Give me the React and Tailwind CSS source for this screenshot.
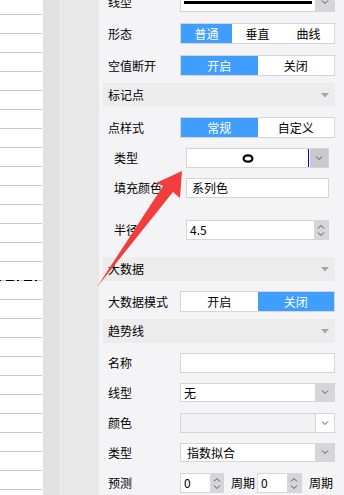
import React from "react";

const Chevron=({up})=>(
    <svg width="8" height="5" viewBox="0 0 8 5">
        <path d={up?"M1 4.5 L4 1.5 L7 4.5":"M1 0.5 L4 3.5 L7 0.5"} stroke="#555" strokeWidth="1" fill="none"/>
    </svg>
)

const Caret=()=>(
    <svg width="8" height="5" viewBox="0 0 8 5">
        <path d="M0 0 L8 0 L4 4.5 Z" fill="#a5a5a5"/>
    </svg>
)

const Seg=({items,active})=>{
    return(
        <div className="flex h-full w-full border border-[#d6d6da] bg-white">
            {items.map((item,index)=>{
                return(
                    <div key={index} className={index===active?"flex flex-1 items-center justify-center bg-[#409eff] text-white":"flex flex-1 items-center justify-center text-black"}>
                        {item}
                    </div>
                )
            })}
        </div>
    )
}

const Row=({label,sub,className,children})=>{
    return(
        <div className={"flex items-center "+className}>
            {sub?<div className="w-[83px] pl-[11px] shrink-0 whitespace-nowrap">{label}</div>:<div className="w-[77px] pl-[5px] shrink-0 whitespace-nowrap">{label}</div>}
            <div className={sub?"flex h-full flex-1 mr-[6px]":"flex h-full flex-1"}>{children}</div>
        </div>
    )
}

const Header=({title,className})=>{
    return(
        <div className={"flex h-[24px] items-center justify-between bg-[#ececec] pl-[5px] pr-[6px] "+className}>
            <span>{title}</span>
            <Caret/>
        </div>
    )
}

const Select=({children,grey=true,disabled=false})=>{
    return(
        <div className={disabled?"flex h-full w-full border border-[#d6d6da] bg-[#f2f2f4]":"flex h-full w-full border border-[#d6d6da] bg-white"}>
            <div className="flex flex-1 items-center pl-[3px]">{children}</div>
            <div className={grey?"flex w-[19px] items-center justify-center bg-[#d6d6da]":"flex w-[19px] items-center justify-center bg-white border-l border-[#d6d6da]"}>
                <Chevron/>
            </div>
        </div>
    )
}

const Spinner=({value,spinW})=>{
    return(
        <div className="flex h-full w-full border border-[#d6d6da] bg-white">
            <div className="flex flex-1 items-center pl-[3px]">{value}</div>
            <div className={"flex flex-col items-center justify-center gap-[3px] bg-[#d6d6da] "+spinW}>
                <Chevron up/>
                <Chevron/>
            </div>
        </div>
    )
}

const App=()=>{
    const lines=[];
    for(let k=0;k<26;k++){
        if(k===14){
            lines.push(
                <div key={k} className="flex h-[19px] w-[42px] flex-col justify-end">
                    <svg width="42" height="1" className="block">
                        <line x1="0" y1="0.5" x2="42" y2="0.5" stroke="#c8c8c8" strokeWidth="1"/>
                        <line x1="0" y1="0.5" x2="42" y2="0.5" stroke="#000" strokeWidth="1" strokeDasharray="8 3 2 5" strokeDashoffset="12"/>
                    </svg>
                </div>
            )
        }else{
            lines.push(<div key={k} className={k===0?"h-[15px] w-[42px] border-b border-[#c8c8c8]":"h-[19px] w-[42px] border-b border-[#c8c8c8]"}></div>)
        }
    }

    return(
        <div className="relative flex h-[495px] w-[344px] overflow-hidden text-[12px] text-black font-['Noto_Sans_CJK_SC','Microsoft_YaHei',sans-serif]">
            {/* left sheet */}
            <div className="flex w-[43px] shrink-0 flex-col bg-white">
                {lines}
            </div>
            <div className="w-[16px] shrink-0 bg-[#e1e1e1]"></div>
            <div className="w-[40px] shrink-0 bg-[#e8e8e8]"></div>

            {/* properties panel */}
            <div className="flex flex-1 flex-col bg-[#f4f4f6] pl-[4px] pr-[9px]">
                <Row label="线型" className="mt-[-8px] h-[20px]">
                    <div className="flex h-full w-full border border-[#d6d6da] bg-white">
                        <div className="flex flex-1 items-center px-[3px]">
                            <div className="h-[3px] w-full bg-black"></div>
                        </div>
                        <div className="flex w-[19px] items-center justify-center bg-[#d6d6da]"><Chevron/></div>
                    </div>
                </Row>
                <Row label="形态" className="mt-[11px] h-[21px]">
                    <Seg items={["普通","垂直","曲线"]} active={0}/>
                </Row>
                <Row label="空值断开" className="mt-[11px] h-[21px]">
                    <Seg items={["开启","关闭"]} active={0}/>
                </Row>

                <Header title="标记点" className="mt-[7px]"/>
                <Row label="点样式" className="mt-[10px] h-[21px]">
                    <Seg items={["常规","自定义"]} active={0}/>
                </Row>
                <Row label="类型" sub className="mt-[10px] h-[20px]">
                    <div className="flex h-full w-full border border-[#d6d6da] bg-white">
                        <div className="flex flex-1 items-center justify-center">
                            <svg width="12" height="9" viewBox="0 0 12 9">
                                <ellipse cx="6" cy="4.5" rx="4.4" ry="3.2" stroke="#000" strokeWidth="2.2" fill="none"/>
                            </svg>
                        </div>
                        <div className="w-px bg-[#0000ff]"></div>
                        <div className="w-px bg-white"></div>
                        <div className="flex w-[18px] items-center justify-center bg-[#cacace]"><Chevron/></div>
                    </div>
                </Row>
                <Row label="填充颜色" sub className="mt-[10px] h-[20px]">
                    <div className="flex h-full w-full items-center border border-[#d6d6da] bg-white pl-[5px]">系列色</div>
                </Row>
                <Row label="半径" sub className="mt-[22px] h-[20px]">
                    <Spinner value="4.5" spinW="w-[14px]"/>
                </Row>

                <Header title="大数据" className="mt-[17px]"/>
                <Row label="大数据模式" className="mt-[10px] h-[21px]">
                    <Seg items={["开启","关闭"]} active={1}/>
                </Row>

                <Header title="趋势线" className="mt-[7px]"/>
                <Row label="名称" className="mt-[10px] h-[20px]">
                    <div className="h-full w-full border border-[#d6d6da] bg-white"></div>
                </Row>
                <Row label="线型" className="mt-[10px] h-[19px]">
                    <Select>无</Select>
                </Row>
                <Row label="颜色" className="mt-[11px] h-[20px]">
                    <Select grey={false} disabled></Select>
                </Row>
                <Row label="类型" className="mt-[10px] h-[19px]">
                    <Select><span className="pl-[3px]">指数拟合</span></Select>
                </Row>
                <Row label="预测" className="mt-[11px] h-[20px]">
                    <div className="flex h-full w-full items-center">
                        <div className="h-full w-[44px]"><Spinner value="0" spinW="w-[13px]"/></div>
                        <span className="ml-[7px]">周期</span>
                        <div className="ml-[2px] h-full w-[45px]"><Spinner value="0" spinW="w-[14px]"/></div>
                        <span className="ml-[7px]">周期</span>
                    </div>
                </Row>
            </div>

            {/* annotation arrow */}
            <svg className="pointer-events-none absolute left-0 top-0" width="344" height="495" viewBox="0 0 344 495">
                <polygon points="182,171 156,183 163,186 97,287 173,192 180,198" fill="#f23d3d"/>
            </svg>
        </div>
    )
}

export default App;
